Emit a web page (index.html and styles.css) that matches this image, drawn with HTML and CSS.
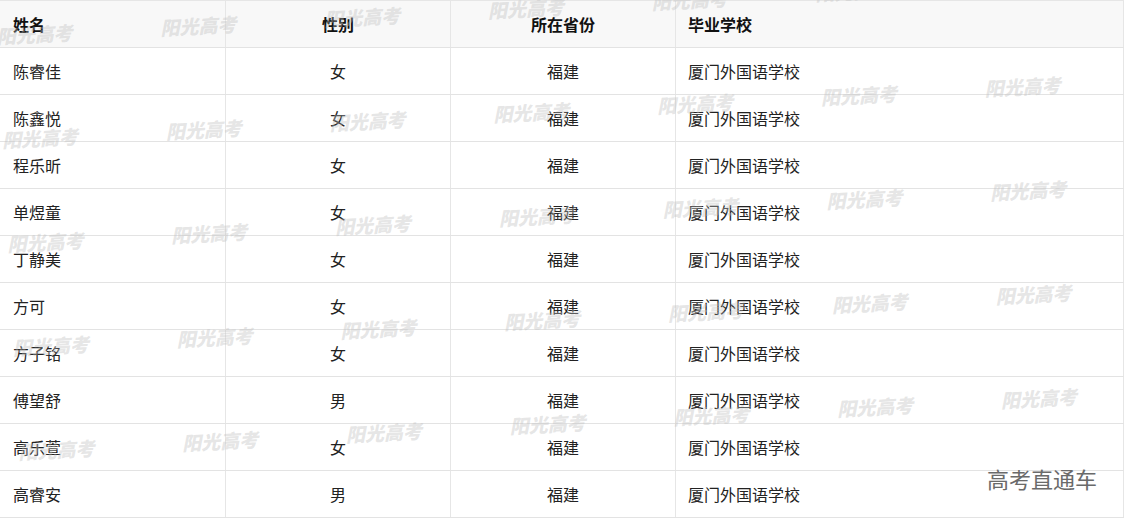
FILE: index.html
```html
<!DOCTYPE html>
<html lang="zh-CN">
<head>
<meta charset="utf-8">
<title>名单</title>
<link rel="stylesheet" href="styles.css">
</head>
<body>
<div class="page">
  <div class="table">
    <div class="row head">
      <div class="cell c1">姓名</div>
      <div class="cell c2">性别</div>
      <div class="cell c3">所在省份</div>
      <div class="cell c4">毕业学校</div>
    </div>
    <div class="row"><div class="cell c1">陈睿佳</div><div class="cell c2">女</div><div class="cell c3">福建</div><div class="cell c4">厦门外国语学校</div></div>
    <div class="row"><div class="cell c1">陈鑫悦</div><div class="cell c2">女</div><div class="cell c3">福建</div><div class="cell c4">厦门外国语学校</div></div>
    <div class="row"><div class="cell c1">程乐昕</div><div class="cell c2">女</div><div class="cell c3">福建</div><div class="cell c4">厦门外国语学校</div></div>
    <div class="row"><div class="cell c1">单煜童</div><div class="cell c2">女</div><div class="cell c3">福建</div><div class="cell c4">厦门外国语学校</div></div>
    <div class="row"><div class="cell c1">丁静美</div><div class="cell c2">女</div><div class="cell c3">福建</div><div class="cell c4">厦门外国语学校</div></div>
    <div class="row"><div class="cell c1">方可</div><div class="cell c2">女</div><div class="cell c3">福建</div><div class="cell c4">厦门外国语学校</div></div>
    <div class="row"><div class="cell c1">方子铭</div><div class="cell c2">女</div><div class="cell c3">福建</div><div class="cell c4">厦门外国语学校</div></div>
    <div class="row"><div class="cell c1">傅望舒</div><div class="cell c2">男</div><div class="cell c3">福建</div><div class="cell c4">厦门外国语学校</div></div>
    <div class="row"><div class="cell c1">高乐萱</div><div class="cell c2">女</div><div class="cell c3">福建</div><div class="cell c4">厦门外国语学校</div></div>
    <div class="row"><div class="cell c1">高睿安</div><div class="cell c2">男</div><div class="cell c3">福建</div><div class="cell c4">厦门外国语学校</div></div>
  </div>

  <div class="marks">
    <span>阳光高考</span><span>阳光高考</span><span>阳光高考</span><span>阳光高考</span><span>阳光高考</span><span>阳光高考</span><span>阳光高考</span>
    <span>阳光高考</span><span>阳光高考</span><span>阳光高考</span><span>阳光高考</span><span>阳光高考</span><span>阳光高考</span><span>阳光高考</span>
    <span>阳光高考</span><span>阳光高考</span><span>阳光高考</span><span>阳光高考</span><span>阳光高考</span><span>阳光高考</span><span>阳光高考</span>
    <span>阳光高考</span><span>阳光高考</span><span>阳光高考</span><span>阳光高考</span><span>阳光高考</span><span>阳光高考</span><span>阳光高考</span>
    <span>阳光高考</span><span>阳光高考</span><span>阳光高考</span><span>阳光高考</span><span>阳光高考</span><span>阳光高考</span><span>阳光高考</span>
  </div>

  <div class="brand">高考直通车</div>
</div>
</body>
</html>
```

FILE: styles.css
```css
html, body {
  margin: 0;
  padding: 0;
  background: #ffffff;
}

body {
  font-family: "Noto Sans CJK SC", "Noto Sans", sans-serif;
  font-size: 16px;
  color: #222;
  width: 1125px;
  height: 518px;
  overflow: hidden;
}

.page {
  position: relative;
  width: 1125px;
  height: 518px;
  overflow: hidden;
}

.table {
  width: 1124px;
  border-top: 1px solid #e6e6e6;
}

.row {
  display: flex;
  height: 47px;
  box-sizing: border-box;
  border-bottom: 1px solid #e3e3e3;
}

.row.head {
  height: 47px;
  background: #f8f8f8;
  font-weight: 700;
  color: #111;
}

.cell {
  box-sizing: border-box;
  display: flex;
  align-items: center;
  border-right: 1px solid #e6e6e6;
  line-height: 1;
}

.c1 {
  width: 226px;
  padding-left: 13px;
}

.c2 {
  width: 225px;
  justify-content: center;
}

.c3 {
  width: 225px;
  justify-content: center;
}

.c4 {
  width: 448px;
  padding-left: 12px;
}

.marks {
  position: absolute;
  left: -4px;
  top: 26px;
  display: grid;
  grid-template-columns: repeat(7, 164px);
  grid-auto-rows: 104px;
  transform: rotate(-3deg);
  transform-origin: 0 0;
  pointer-events: none;
}

.marks span {
  font-size: 19px;
  font-weight: 900;
  font-style: italic;
  line-height: 20px;
  color: rgba(190, 190, 190, 0.4);
  white-space: nowrap;
}

.brand {
  position: absolute;
  right: 28px;
  top: 464px;
  font-size: 22px;
  line-height: 28px;
  color: #6a6a6a;
}
```
